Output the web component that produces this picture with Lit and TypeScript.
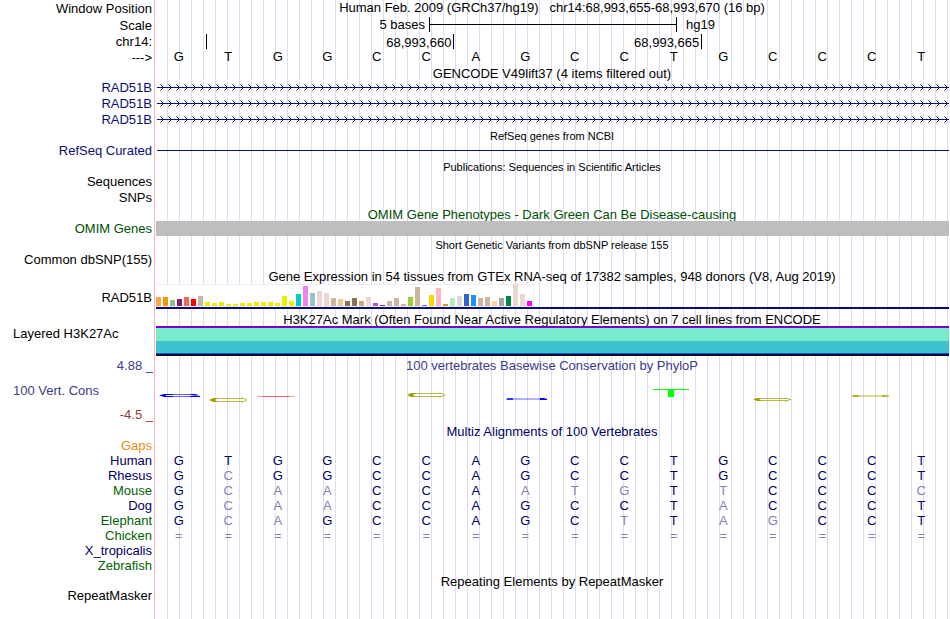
import { LitElement, html, svg, css, nothing } from "lit";
import { customElement } from "lit/decorators.js";
import { classMap } from "lit/directives/class-map.js";
import { styleMap } from "lit/directives/style-map.js";

const REFERENCE = "GTGGCCAGCCTGCCCT";

const SPECIES = [
  { name: "Gaps", tone: "orange", bases: "" },
  { name: "Human", tone: "blue", bases: REFERENCE },
  { name: "Rhesus", tone: "blue", bases: "GCGGCCAGCCTGCCCT" },
  { name: "Mouse", tone: "green", bases: "GCAACCAATGTTCCCC" },
  { name: "Dog", tone: "blue", bases: "GCAACCAGCCTACCCT" },
  { name: "Elephant", tone: "green", bases: "GCAGCCAGCTTAGCCT" },
  { name: "Chicken", tone: "green", bases: "================" },
  { name: "X_tropicalis", tone: "blue", bases: "" },
  { name: "Zebrafish", tone: "green", bases: "" },
];

// GTEx tissues in track order: [colour, bar height]
const TISSUES: [string, number][] = [
  ["#ffa54f", 9], ["#ee9a00", 9], ["#8fbc8f", 6], ["#8b1c62", 7], ["#ee6a50", 9], ["#ff0000", 7],
  ["#cdb79e", 10], ["#eeee00", 4], ["#eeee00", 3], ["#eeee00", 4], ["#eeee00", 2], ["#eeee00", 2],
  ["#eeee00", 3], ["#eeee00", 3], ["#eeee00", 4], ["#eeee00", 4], ["#eeee00", 4], ["#eeee00", 3],
  ["#eeee00", 10], ["#eeee00", 5], ["#00cdcd", 12], ["#ee82ee", 20], ["#9ac0cd", 13], ["#eed5d2", 15],
  ["#eed5d2", 13], ["#cdb79e", 8], ["#eec591", 7], ["#8b7355", 5], ["#8b7355", 8], ["#cdaa7d", 5],
  ["#eed5d2", 9], ["#b452cd", 3], ["#7a378b", 1], ["#cdb79e", 5], ["#cdb79e", 8], ["#cdb79e", 2],
  ["#9acd32", 9], ["#cdb79e", 19], ["#7a67ee", 1], ["#ffd700", 11], ["#ffb6c1", 18], ["#cd9b1d", 2],
  ["#b4eeb4", 8], ["#d9d9d9", 10], ["#3a5fcd", 12], ["#1e90ff", 11], ["#cdb79e", 8], ["#cdb79e", 9],
  ["#ffd39b", 5], ["#a6a6a6", 8], ["#008b45", 10], ["#eed5d2", 22], ["#eed5d2", 12], ["#ff00ff", 5],
];

// Flattened conservation letters, keyed by base column; y runs from the top of the plot strip.
const flatC = (y: number, h: number, color: string) => svg`
  <path d="M34 ${y + 0.5}H7M34 ${y + h - 0.5}H7" fill="none" stroke=${color} stroke-opacity="0.7"/>
  <path d="M0 ${y + h / 2}L4 ${y}H9L6 ${y + h / 2}L9 ${y + h}H4Z" fill=${color}/>
  <path d="M32 ${y}L38 ${y + 1.5}M32 ${y + h}L38 ${y + h - 1.5}" stroke=${color} stroke-opacity="0.7"/>`;

const LOGO: Record<number, unknown> = {
  0: svg`
    <path d="M36 8.5H8M6 10.5H32" fill="none" stroke="#0000ff" stroke-opacity="0.6"/>
    <path d="M0 9.5L5 8H14V9H7V10H14V11H5Z" fill="#0000ff"/>
    <path d="M30 8H37L40 9.5H34ZM31 10H41V11H31Z" fill="#0000ff"/>`,
  1: flatC(12, 4, "#a0a000"),
  2: svg`
    <path d="M0 10.5H37" stroke="#ff0000" stroke-opacity="0.4"/>
    <path d="M5 10.5H31" stroke="#ff0000" stroke-opacity="0.4"/>`,
  5: flatC(7, 4, "#a0a000"),
  7: svg`
    <path d="M1 12H38V14H1Z" fill="#0000ff" fill-opacity="0.3"/>
    <path d="M0 13L2 12H7V14H1Z" fill="#0000ff" fill-opacity="0.7"/>
    <path d="M34 12H38L41 13V14H34Z" fill="#0000ff"/>`,
  10: svg`<path d="M-1 3H35V4H20V11H14V4H-1Z" fill="#00ff00" shape-rendering="crispEdges"/>`,
  12: flatC(12, 3, "#a0a000"),
  14: svg`
    <path d="M0 9.5H37M1 10.5H34" stroke="#a0a000" stroke-opacity="0.4"/>
    <path d="M0 9H7V11H1ZM30 9H34L38 10L34 11H30Z" fill="#a0a000" fill-opacity="0.7"/>`,
};

@customElement("app-root")
export class AppRoot extends LitElement {
  static styles = css`
    :host {
      display: block;
      font-family: "Liberation Sans", Arial, Helvetica, sans-serif;
      font-size: 13px;
      line-height: 16px;
      color: #000;
      background: #fff;
    }
    .chart {
      min-height: 100vh;
      box-sizing: border-box;
      background:
        linear-gradient(#ffb4b4, #ffb4b4) 154px 0 / 1px 100% no-repeat,
        linear-gradient(#fff, #fff) 0 0 / 160px 100% no-repeat,
        linear-gradient(to right, #dcdcf5 1px, transparent 1px) 167px 0 / 12px 100%;
    }
    .row {
      display: grid;
      grid-template-columns: 154px minmax(0, 1fr);
      height: 16px;
    }
    .h15 { height: 15px; line-height: 15px; }
    .h17 { height: 17px; line-height: 17px; }
    .label { text-align: right; padding-right: 2px; white-space: nowrap; }
    .title {
      grid-column: 2;
      margin: 0;
      text-align: center;
      font-size: 13px;
      font-weight: normal;
      line-height: 18px;
      white-space: pre;
    }
    .window { line-height: 16px; }
    .tight { height: 14px; }
    .tight .title, .h15 .small { line-height: 16px; }
    .small { font-size: 11px; }
    .low { line-height: 22px; }
    .track { margin: 0 1px 0 2px; min-width: 0; }
    .navy { color: #0c0c78; }
    .forest { color: #005000; }
    .blue { color: #000064; }
    .green { color: #006400; }
    .orange { color: #e68c14; }
    .indigo { color: #3c3c8c; }
    .maroon { color: #8c3c3c; }

    .scale { display: grid; grid-template-columns: 1fr 31.25% 1fr; margin-left: 2px; line-height: 16px; }
    .scale-left { text-align: right; padding-right: 4px; }
    .scale-right { padding-left: 9px; }
    .ruler {
      height: 15px;
      box-sizing: border-box;
      border: solid #000;
      border-width: 0 1px;
      background: linear-gradient(#000, #000) 0 7px / 100% 1px no-repeat;
    }
    .positions { display: grid; grid-template-columns: repeat(16, minmax(0, 1fr)); line-height: 17px; }
    .tick { grid-column: span 5; height: 15px; border-left: 1px solid #000; text-align: right; padding-right: 2px; }
    .bases {
      display: grid;
      grid-template-columns: repeat(16, minmax(0, 1fr));
      margin-right: 4px;
      text-align: center;
      line-height: 14px;
    }
    .arrows { display: block; width: 100%; height: 16px; }
    .line { height: 1px; margin-top: 7px; margin-left: 3px; background: #0c0c78; }
    .omim { height: 15px; background: #bebebe; }

    .gtex-row { height: 25px; line-height: 27px; }
    .gtex { align-self: start; border-bottom: 2px solid #0c0c78; }
    .bars {
      display: flex;
      gap: 2px;
      align-items: flex-end;
      width: max-content;
      height: 23px;
      padding-right: 1px;
      box-sizing: border-box;
      background: #fff;
      border: solid #eeeeee;
      border-width: 1px 1px 1px 0;
    }
    .bar { width: 5px; }

    .layered-row { height: 30px; }
    .left { text-align: left; padding-left: 13px; }
    .layers { display: grid; grid-template-rows: 2px 13px 12px 1px 2px; z-index: 1; }
    .layer-a { background: #7800c8; }
    .layer-b { background: #78ebcd; }
    .layer-c { background: #3cc3cd; }
    .layer-d { background: #1e50c8; }
    .layer-e { background: #0a0a32; }

    .cons-row { height: 67px; line-height: 20px; }
    .cons-labels { display: flex; flex-direction: column; justify-content: space-between; height: 69px; }
    .limit { text-align: right; padding-right: 1px; }
    .cons-title { height: 18px; line-height: 20px; }
    .logo { display: grid; grid-template-columns: repeat(16, minmax(0, 1fr)); margin: 12px 4px 0 0; }
    .cell { padding-left: 5px; }
    .glyph { display: block; width: 42px; height: 20px; overflow: visible; }

    .multiz { width: calc(100% - 4px); table-layout: fixed; border-collapse: collapse; line-height: 15px; }
    .species { width: 152px; padding: 0 2px 0 0; text-align: right; font-weight: normal; height: 15px; }
    .base { padding: 0; text-align: center; color: #000064; }
    .diff { color: #8282b4; }
  `;

  private arrows(id: string) {
    return html`<svg class="arrows" aria-hidden="true" shape-rendering="crispEdges">
      <defs>
        <pattern id=${id} x="3" width="8" height="16" patternUnits="userSpaceOnUse">
          <path d="M2 5h1v1h-1zM3 6h1v1h-1zM3 8h1v1h-1zM2 9h1v1h-1z" fill="#0c0c78" />
          <path d="M1 4h1v1h-1zM1 10h1v1h-1z" fill="#0c0c78" fill-opacity="0.5" />
        </pattern>
      </defs>
      <rect x="1" y="7" width="100%" height="1" fill="#0c0c78" />
      <rect x="3" width="100%" height="16" fill="url(#${id})" />
    </svg>`;
  }

  private title(text: string, classes = "") {
    return html`<div class="row ${classes}"><h2 class="title">${text}</h2></div>`;
  }

  private labelled(label: string, content: unknown = nothing, classes = "") {
    return html`<div class="row"><div class="label ${classes}">${label}</div>${content}</div>`;
  }

  render() {
    return html`<main class="chart">
      <div class="row h17">
        <div class="label">Window Position</div>
        <h1 class="title window">Human Feb. 2009 (GRCh37/hg19)   chr14:68,993,655-68,993,670 (16 bp)</h1>
      </div>
      <div class="row h17">
        <div class="label">Scale</div>
        <div class="scale"><span class="scale-left">5 bases</span><span class="ruler"></span><span class="scale-right">hg19</span></div>
      </div>
      ${this.labelled("chr14:", html`<div class="track positions"><span></span><span class="tick">68,993,660</span><span class="tick">68,993,665</span><span class="tick"></span></div>`)}
      ${this.labelled("--->", html`<div class="bases">${[...REFERENCE].map((b) => html`<span>${b}</span>`)}</div>`)}
      ${this.title("GENCODE V49lift37 (4 items filtered out)", "tight")}
      ${[1, 2, 3].map((n) => this.labelled("RAD51B", html`<div class="track">${this.arrows(`strand${n}`)}</div>`, "navy"))}
      <div class="row h15"><h2 class="title small">RefSeq genes from NCBI</h2></div>
      ${this.labelled("RefSeq Curated", html`<div class="track line"></div>`, "navy")}
      <div class="row h15"><h2 class="title small">Publications: Sequences in Scientific Articles</h2></div>
      ${this.labelled("Sequences")}
      ${this.labelled("SNPs")}
      ${this.title("OMIM Gene Phenotypes - Dark Green Can Be Disease-causing", "forest h15")}
      <div class="row h15"><div class="label forest">OMIM Genes</div><div class="track omim"></div></div>
      <div class="row"><h2 class="title small">Short Genetic Variants from dbSNP release 155</h2></div>
      ${this.labelled("Common dbSNP(155)")}
      ${this.title("Gene Expression in 54 tissues from GTEx RNA-seq of 17382 samples, 948 donors (V8, Aug 2019)")}
      <div class="row gtex-row">
        <div class="label">RAD51B</div>
        <div class="track gtex"><div class="bars">
          ${TISSUES.map(([color, height]) => html`<div class="bar" style=${styleMap({ height: `${height}px`, background: color })}></div>`)}
        </div></div>
      </div>
      <div class="row h17"><h2 class="title low">H3K27Ac Mark (Often Found Near Active Regulatory Elements) on 7 cell lines from ENCODE</h2></div>
      <div class="row layered-row">
        <div class="label left">Layered H3K27Ac</div>
        <div class="track layers">
          <div class="layer-a"></div><div class="layer-b"></div><div class="layer-c"></div><div class="layer-d"></div><div class="layer-e"></div>
        </div>
      </div>
      <div class="row cons-row">
        <div class="cons-labels">
          <div class="limit indigo">4.88 _</div>
          <div class="left indigo">100 Vert. Cons</div>
          <div class="limit maroon">-4.5 _</div>
        </div>
        <div>
          <h2 class="title cons-title indigo">100 vertebrates Basewise Conservation by PhyloP</h2>
          <div class="logo">${[...REFERENCE].map((_, i) => html`<div class="cell">${LOGO[i] ? html`<svg class="glyph" viewBox="0 0 42 20" aria-hidden="true">${LOGO[i]}</svg>` : nothing}</div>`)}</div>
        </div>
      </div>
      ${this.title("Multiz Alignments of 100 Vertebrates", "blue h15")}
      <table class="multiz">
        <tbody>
          ${SPECIES.map((s) => html`<tr>
            <th scope="row" class="species ${s.tone}">${s.name}</th>
            ${[...REFERENCE].map((ref, i) => html`<td class=${classMap({ base: true, diff: s.bases[i] !== ref })}>${s.bases[i] ?? nothing}</td>`)}
          </tr>`)}
        </tbody>
      </table>
      ${this.title("Repeating Elements by RepeatMasker", "h15")}
      ${this.labelled("RepeatMasker")}
    </main>`;
  }
}
